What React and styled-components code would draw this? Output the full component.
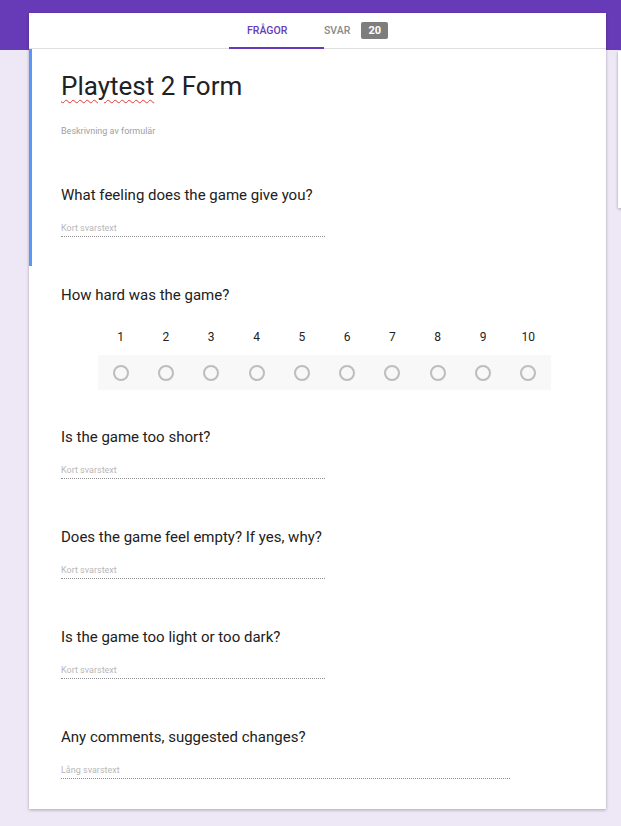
import React from "react";
import styled, { createGlobalStyle } from "styled-components";

const Global = createGlobalStyle`
  html, body {
    margin: 0;
    padding: 0;
    background: #ede7f6;
    font-family: Roboto, "Liberation Sans", Arial, sans-serif;
    overflow: hidden;
  }
`;

const Page = styled.div`
  min-height: 100vh;
  width: 100%;
  overflow: hidden;
  display: flex;
  align-items: flex-start;
  padding: 13px 0 0 29px;
  box-sizing: border-box;
  background: linear-gradient(#673ab7 0 50px, #ede7f6 50px);
`;

const Card = styled.div`
  flex: 0 0 577px;
  background: #fff;
  box-shadow: 0 1px 3px rgba(0, 0, 0, 0.28);
`;

const SidePanel = styled.div`
  flex: 0 0 40px;
  height: 157px;
  margin: 38px 0 0 12px;
  background: #fff;
  box-shadow: 0 1px 3px rgba(0, 0, 0, 0.3);
`;

const TabBar = styled.div`
  height: 35px;
  display: flex;
  align-items: stretch;
  padding-left: 200px;
  border-bottom: 1px solid #e0e0e0;
`;

const Tab = styled.div`
  display: flex;
  align-items: center;
  box-sizing: border-box;
  width: ${(p) => (p.$active ? "95px" : "auto")};
  padding: ${(p) => (p.$active ? "0 0 0 18px" : "0")};
  font-size: 10.5px;
  font-weight: 500;
  color: ${(p) => (p.$active ? "#673ab7" : "#8a8a8a")};
  border-bottom: 2px solid ${(p) => (p.$active ? "#673ab7" : "transparent")};
  margin-bottom: -1px;
`;

const Badge = styled.span`
  display: inline-flex;
  align-items: center;
  justify-content: center;
  width: 27px;
  height: 17px;
  margin-left: 11px;
  border-radius: 2px;
  background: #7d7d7d;
  color: #fff;
  font-size: 11px;
  font-weight: 700;
`;

const Selected = styled.div`
  border-left: 3px solid #5b95f5;
`;

const Section = styled.div`
  padding: ${(p) => p.$pad || "19px 32px 29px 29px"};
  border-left: ${(p) => (p.$plain ? "3px solid transparent" : "none")};
`;

const Title = styled.h1`
  margin: 0;
  font-size: 26px;
  line-height: 32px;
  font-weight: 400;
  color: #202124;
`;

const Misspelled = styled.span`
  text-decoration: underline wavy #e53935;
  text-decoration-thickness: 1px;
  text-underline-offset: 4px;
`;

const Description = styled.div`
  margin-top: 23px;
  font-size: 9px;
  line-height: 12px;
  color: #a0a0a0;
`;

const Question = styled.div`
  font-size: 15px;
  line-height: 20px;
  color: #212121;
`;

const Answer = styled.div`
  margin-top: 17px;
  width: ${(p) => p.$width}px;
  font-size: 9px;
  line-height: 12px;
  color: #b8b8b8;
  padding-bottom: 2px;
  border-bottom: 1px dotted #8f8f8f;
`;

const Scale = styled.div`
  margin: 24px 0 0 37px;
  width: 453px;
`;

const ScaleRow = styled.div`
  display: grid;
  grid-template-columns: repeat(10, 1fr);
  align-items: center;
  justify-items: center;
  height: ${(p) => (p.$bg ? "35px" : "16px")};
  margin-top: ${(p) => (p.$bg ? "10px" : "0")};
  background: ${(p) => (p.$bg ? "#f8f8f8" : "transparent")};
  font-size: 12px;
  line-height: 16px;
  color: #212121;
`;

const Radio = styled.span`
  width: 12px;
  height: 12px;
  border: 2px solid #bdbdbd;
  border-radius: 50%;
`;

const steps = [1, 2, 3, 4, 5, 6, 7, 8, 9, 10];

const questions = [
  { q: "Is the game too short?", a: "Kort svarstext", w: 264 },
  { q: "Does the game feel empty? If yes, why?", a: "Kort svarstext", w: 264 },
  { q: "Is the game too light or too dark?", a: "Kort svarstext", w: 264 },
  { q: "Any comments, suggested changes?", a: "Lång svarstext", w: 449, last: true },
];

const App = () => {
  return (
    <>
      <Global />
      <Page>
        <Card>
          <TabBar>
            <Tab $active>FRÅGOR</Tab>
            <Tab>
              SVAR <Badge>20</Badge>
            </Tab>
          </TabBar>
          <Selected>
            <Section $pad="21px 32px 29px 29px">
              <Title>
                <Misspelled>Playtest</Misspelled> 2 Form
              </Title>
              <Description>Beskrivning av formulär</Description>
            </Section>
            <Section $pad="19px 32px 29px 29px">
              <Question>What feeling does the game give you?</Question>
              <Answer $width={264}>Kort svarstext</Answer>
            </Section>
          </Selected>
          <Section $plain $pad="19px 32px 18px 29px">
            <Question>How hard was the game?</Question>
            <Scale>
              <ScaleRow>
                {steps.map((n) => (
                  <span key={n}>{n}</span>
                ))}
              </ScaleRow>
              <ScaleRow $bg>
                {steps.map((n) => (
                  <Radio key={n} />
                ))}
              </ScaleRow>
            </Scale>
          </Section>
          {questions.map((item) => (
            <Section key={item.q} $plain $pad={item.last ? "19px 32px 30px 29px" : "19px 32px 29px 29px"}>
              <Question>{item.q}</Question>
              <Answer $width={item.w}>{item.a}</Answer>
            </Section>
          ))}
        </Card>
        <SidePanel />
      </Page>
    </>
  );
};

export default App;
